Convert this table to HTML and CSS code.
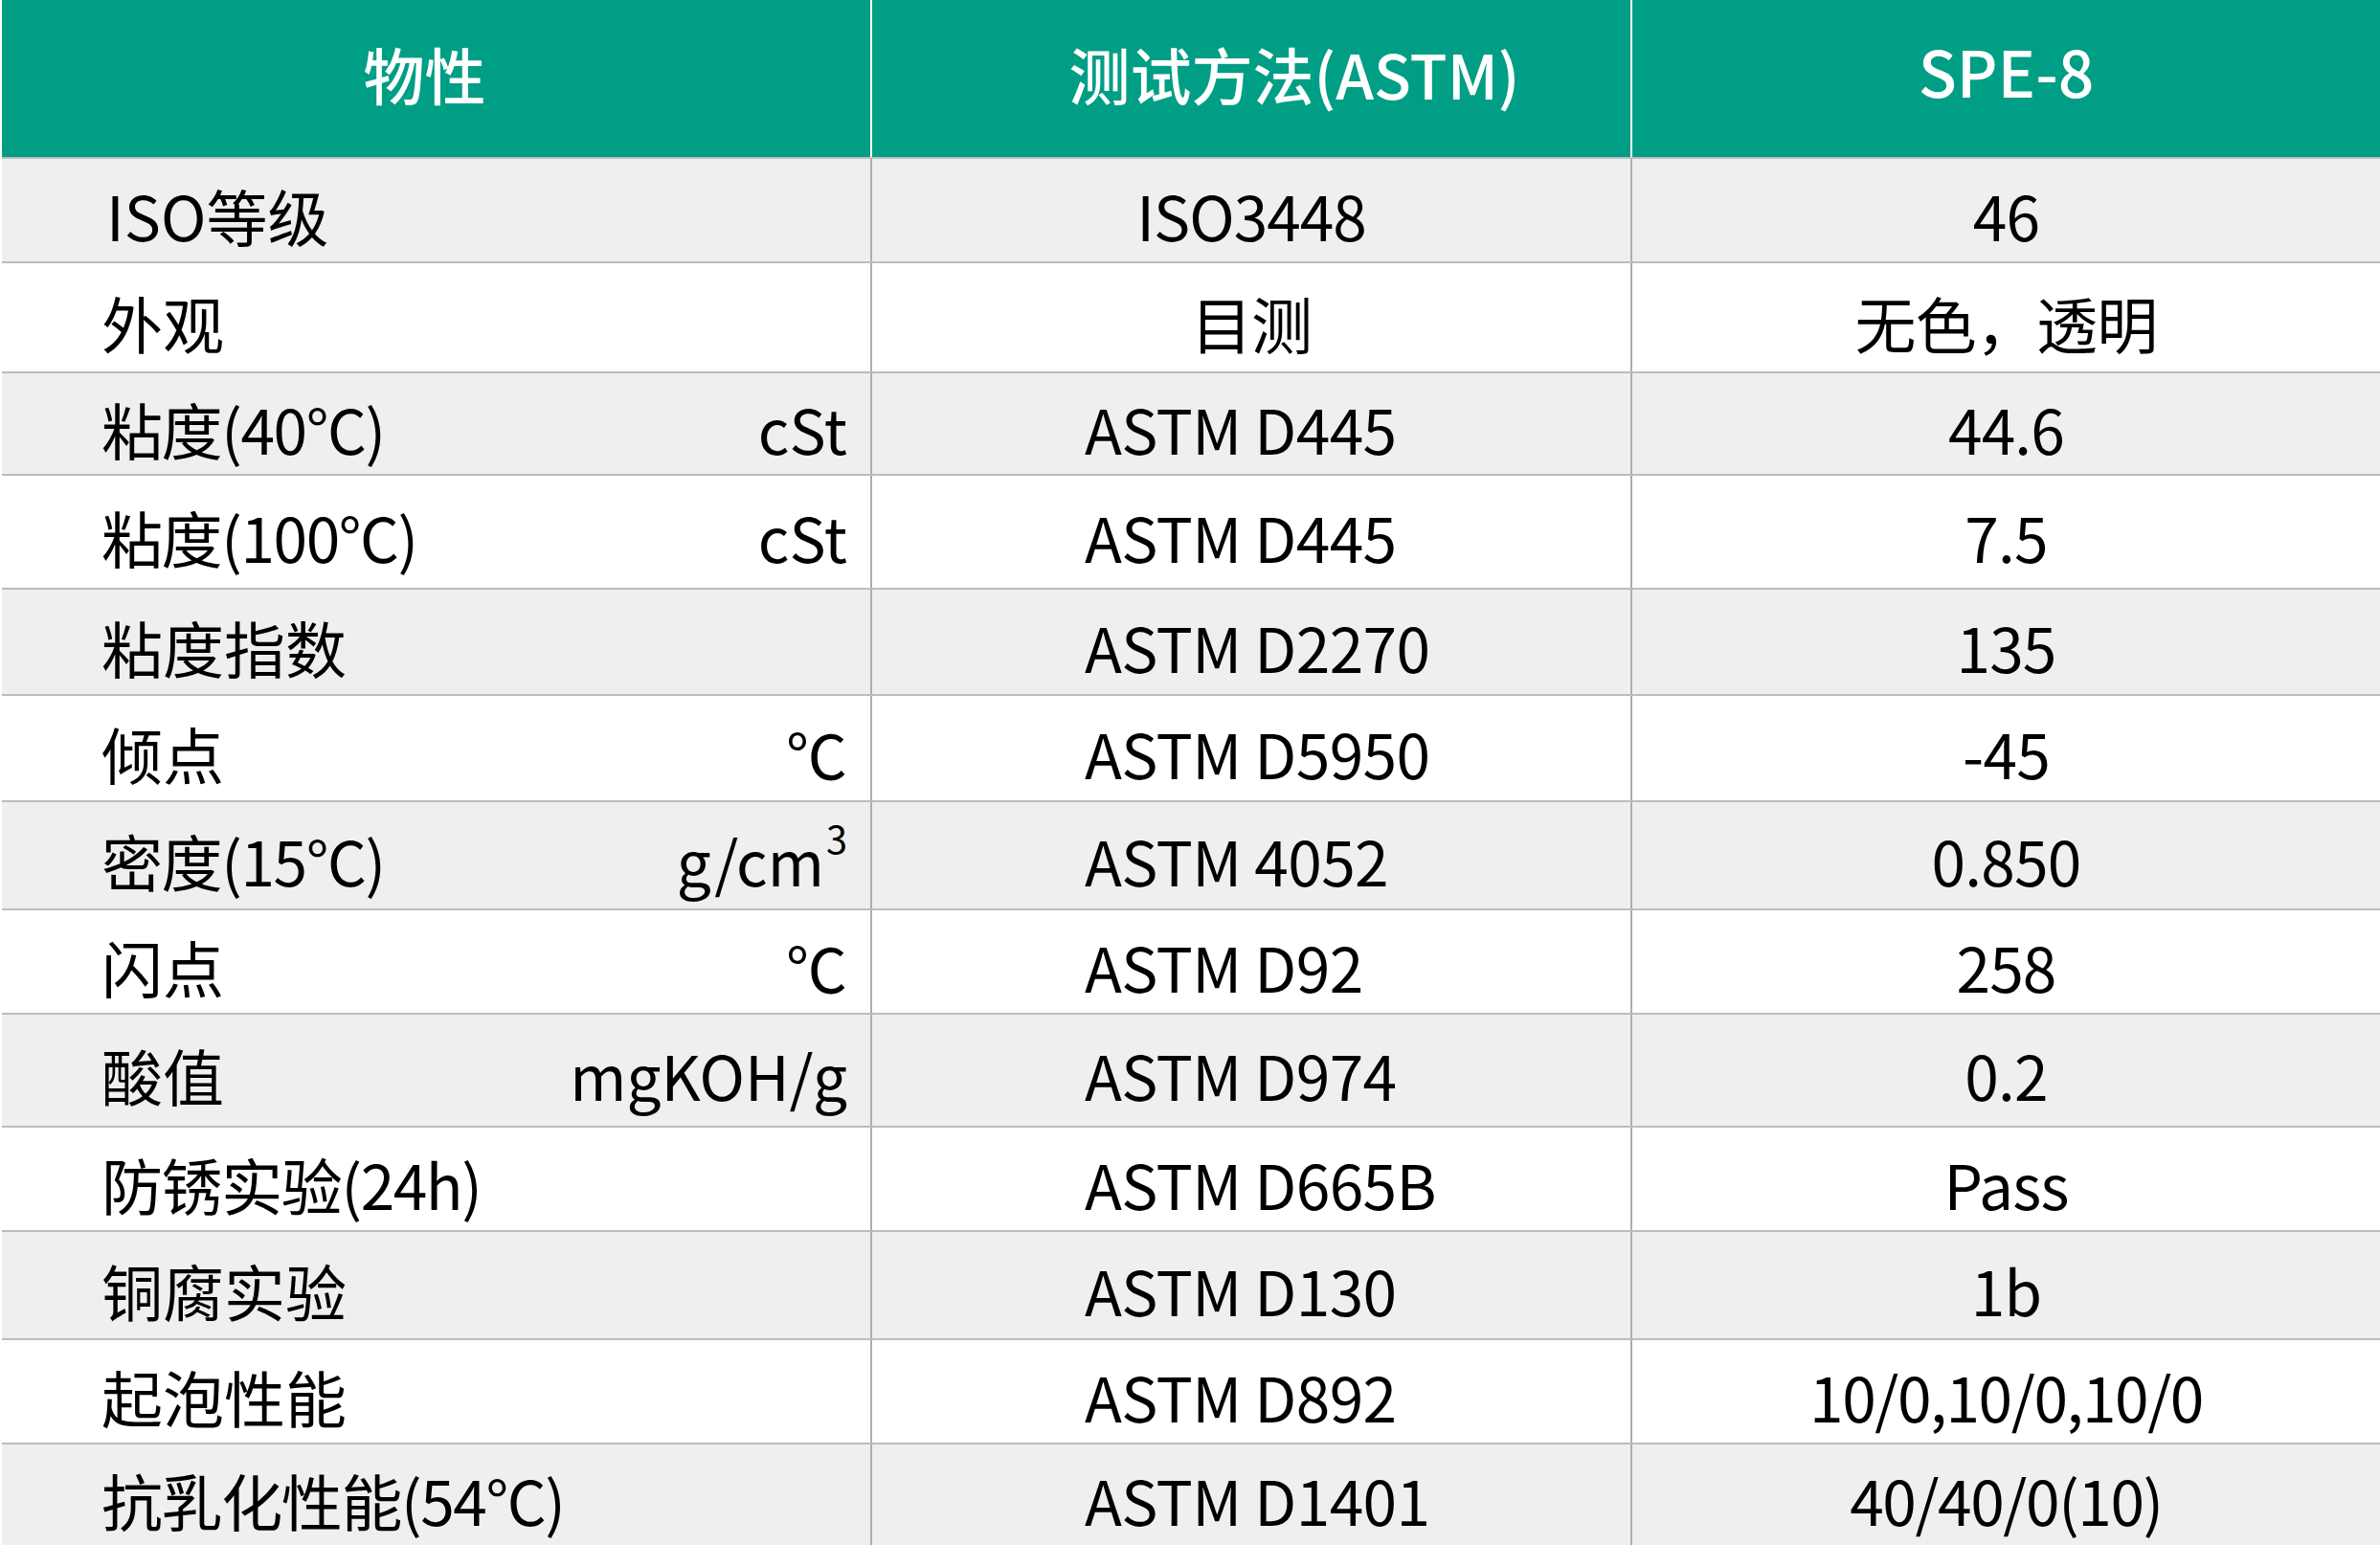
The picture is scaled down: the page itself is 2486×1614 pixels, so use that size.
FILE: index.html
```html
<!DOCTYPE html>
<html lang="zh-CN">
<head>
<meta charset="utf-8">
<title>SPE-8 物性</title>
<link rel="stylesheet" href="styles.css">
</head>
<body>
<div class="table">
  <div class="row head">
    <div class="cell h1">物性</div>
    <div class="cell h2">测试方法(ASTM)</div>
    <div class="cell h3">SPE-8</div>
  </div>
  <div class="row alt">
    <div class="cell prop"><span class="iso">ISO等级</span></div>
    <div class="cell method center">ISO3448</div>
    <div class="cell value">46</div>
  </div>
  <div class="row">
    <div class="cell prop"><span>外观</span></div>
    <div class="cell method center">目测</div>
    <div class="cell value">无色，透明</div>
  </div>
  <div class="row alt">
    <div class="cell prop"><span class="lat">粘度(40°C)</span><span>cSt</span></div>
    <div class="cell method">ASTM D445</div>
    <div class="cell value">44.6</div>
  </div>
  <div class="row">
    <div class="cell prop"><span class="lat">粘度(100°C)</span><span>cSt</span></div>
    <div class="cell method">ASTM D445</div>
    <div class="cell value">7.5</div>
  </div>
  <div class="row alt">
    <div class="cell prop"><span>粘度指数</span></div>
    <div class="cell method">ASTM D2270</div>
    <div class="cell value">135</div>
  </div>
  <div class="row">
    <div class="cell prop"><span>倾点</span><span>℃</span></div>
    <div class="cell method">ASTM D5950</div>
    <div class="cell value">-45</div>
  </div>
  <div class="row alt">
    <div class="cell prop"><span class="lat">密度(15°C)</span><span>g/cm<sup>3</sup></span></div>
    <div class="cell method">ASTM 4052</div>
    <div class="cell value">0.850</div>
  </div>
  <div class="row">
    <div class="cell prop"><span>闪点</span><span>℃</span></div>
    <div class="cell method">ASTM D92</div>
    <div class="cell value">258</div>
  </div>
  <div class="row alt">
    <div class="cell prop"><span>酸值</span><span>mgKOH/g</span></div>
    <div class="cell method">ASTM D974</div>
    <div class="cell value">0.2</div>
  </div>
  <div class="row">
    <div class="cell prop"><span class="lat">防锈实验(24h)</span></div>
    <div class="cell method">ASTM D665B</div>
    <div class="cell value">Pass</div>
  </div>
  <div class="row alt">
    <div class="cell prop"><span>铜腐实验</span></div>
    <div class="cell method">ASTM D130</div>
    <div class="cell value">1b</div>
  </div>
  <div class="row">
    <div class="cell prop"><span>起泡性能</span></div>
    <div class="cell method">ASTM D892</div>
    <div class="cell value lat">10/0,10/0,10/0</div>
  </div>
  <div class="row alt">
    <div class="cell prop"><span class="lat">抗乳化性能(54°C)</span></div>
    <div class="cell method">ASTM D1401</div>
    <div class="cell value lat">40/40/0(10)</div>
  </div>
</div>
</body>
</html>
```
FILE: styles.css
```css
html, body {
  margin: 0;
  padding: 0;
  background: #ffffff;
  overflow: hidden;
}

body {
  font-family: "Noto Sans CJK SC", "Noto Sans", sans-serif;
  color: #000000;
}

.table {
  display: grid;
  height: 1614px;
  margin-left: 2px;
  grid-template-rows: 164px 109px 115px 107px 119px 111px 111px 113px 109px 118px 109px 113px 109px 107px;
}

.row {
  display: grid;
  grid-template-columns: 907px 794px 1fr;
  border-top: 2px solid #bcbcbc;
  background: #ffffff;
}

.row.alt {
  background: #efefef;
}

.row.head {
  border-top: none;
  background: #009e85;
  color: #ffffff;
}

.cell {
  display: flex;
  align-items: center;
  font-size: 64px;
  line-height: 1;
  white-space: nowrap;
  padding-top: 8px;
}

.row .cell + .cell {
  border-left: 2px solid #adadad;
}

.row.head .cell + .cell {
  border-left: 2px solid #ffffff;
}

.head .cell {
  justify-content: center;
  padding-top: 0;
  padding-bottom: 12px;
  font-weight: 500;
}

.head .h1 {
  padding-right: 24px;
}

.head .h2 {
  padding-left: 90px;
}

.head .h3 {
  font-size: 66px;
  padding-bottom: 18px;
}

.prop {
  justify-content: space-between;
  padding-left: 104px;
  padding-right: 24px;
}

.prop .iso {
  padding-left: 5px;
}

.prop sup {
  font-size: 0.62em;
  line-height: 0;
  vertical-align: 0.85em;
  margin-left: 2px;
}

.method {
  justify-content: flex-start;
  padding-left: 222px;
  letter-spacing: -0.6px;
}

.method.center {
  justify-content: center;
  padding-left: 0;
  letter-spacing: -1px;
}

.value {
  justify-content: center;
  letter-spacing: -0.8px;
}

.lat {
  letter-spacing: -1.4px;
}
```
